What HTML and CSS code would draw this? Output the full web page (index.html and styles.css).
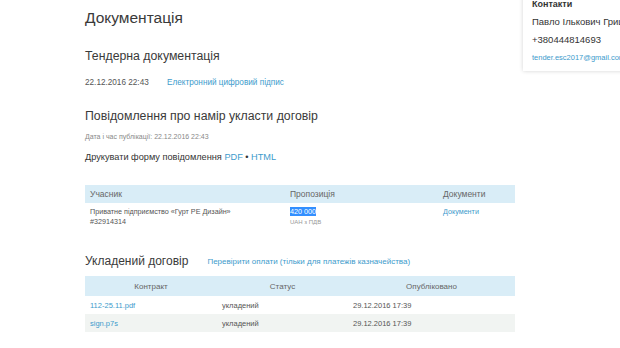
FILE: index.html
```html
<!DOCTYPE html>
<html lang="uk">
<head>
  <meta charset="UTF-8">
  <title>Документація</title>
  <link rel="stylesheet" href="styles.css">
</head>
<body>
  <div class="page">

    <!-- Main column -->
    <div class="main">
      <h1 class="title">Документація</h1>

      <h2 class="section-title">Тендерна документація</h2>
      <div class="doc-line">
        <span class="doc-date">22.12.2016 22:43</span>
        <a href="#" class="link">Електронний цифровий підпис</a>
      </div>

      <h2 class="section-title">Повідомлення про намір укласти договір</h2>
      <p class="meta">Дата і час публікації: 22.12.2016 22:43</p>
      <p class="print">Друкувати форму повідомлення <a href="#" class="link">PDF</a> &bull; <a href="#" class="link">HTML</a></p>

      <table class="grid bids">
        <thead>
          <tr>
            <th class="c-part">Учасник</th>
            <th class="c-offer">Пропозиція</th>
            <th>Документи</th>
          </tr>
        </thead>
        <tbody>
          <tr>
            <td>Приватне підприємство «Гурт РЕ Дизайн»<br>#32914314</td>
            <td><span class="amount">420 000</span><br><span class="currency">UAH з ПДВ</span></td>
            <td><a href="#" class="link">Документи</a></td>
          </tr>
        </tbody>
      </table>

      <div class="contract-head">
        <h3 class="contract-title">Укладений договір</h3>
        <a href="#" class="link check">Перевірити оплати (тільки для платежів казначейства)</a>
      </div>

      <table class="grid contracts">
        <thead>
          <tr>
            <th class="c-file">Контракт</th>
            <th class="c-status">Статус</th>
            <th>Опубліковано</th>
          </tr>
        </thead>
        <tbody>
          <tr>
            <td><a href="#" class="link">112-25.11.pdf</a></td>
            <td>укладений</td>
            <td>29.12.2016 17:39</td>
          </tr>
          <tr class="odd">
            <td><a href="#" class="link">sign.p7s</a></td>
            <td>укладений</td>
            <td>29.12.2016 17:39</td>
          </tr>
        </tbody>
      </table>
    </div>

    <!-- Contacts sidebar -->
    <div class="contacts">
      <div class="contacts-title">Контакти</div>
      <div class="contacts-line">Павло Ількович Грицай</div>
      <div class="contacts-line">+380444814693</div>
      <div class="contacts-line email"><a href="#" class="link">tender.esc2017@gmail.com</a></div>
    </div>

  </div>
</body>
</html>
```

FILE: styles.css
```css
html, body { margin: 0; padding: 0; background: #fff; overflow: hidden; }
body { font-family: "Liberation Sans", Arial, sans-serif; color: #333; }
.page { display: flex; align-items: flex-start; gap: 8px; padding-left: 85px; }
.main { width: 430px; flex: none; padding-top: 7px; }
.link { color: #3d9bcc; text-decoration: none; }

.title { font-size: 15.5px; line-height: 22px; font-weight: normal; margin: 0 0 18px; color: #3a3a3a; }
.section-title { font-size: 12.3px; line-height: 18px; font-weight: normal; margin: 0; color: #3a3a3a; }
.doc-line { font-size: 8.2px; line-height: 12px; margin: 12px 0 18px; color: #555; }
.doc-date { margin-right: 16px; }
.meta { font-size: 7px; line-height: 10px; color: #888; margin: 7px 0 0; }
.print { font-size: 9.2px; line-height: 12px; margin: 9px 0 22px; }

.grid { width: 430px; border-collapse: collapse; table-layout: fixed; }
.grid th { background: #d9edf7; font-weight: normal; color: #666; }
.grid td { color: #555; vertical-align: top; }

.bids th { text-align: left; font-size: 8.5px; height: 18px; padding: 0 5px; }
.bids td { font-size: 7.2px; line-height: 10px; padding: 4px 5px 4px; }
.bids .c-part { width: 190px; }
.bids .c-offer { width: 143px; }
.amount { background: #338fff; color: #fff; }
.currency { font-size: 6px; color: #999; }

.contract-head { display: flex; align-items: center; gap: 19px; margin: 22px 0 7px; }
.contract-title { font-size: 12px; line-height: 16px; font-weight: normal; margin: 0; color: #3a3a3a; }
.check { font-size: 8px; }

.contracts th { text-align: center; font-size: 8px; height: 20px; padding: 0; }
.contracts td { font-size: 7.5px; height: 18px; padding: 0 5px; vertical-align: middle; }
.contracts .c-file { width: 132px; }
.contracts .c-status { width: 131px; }
.contracts .odd td { background: #f1f4f2; }

.contacts { flex: none; width: 130px; margin-top: -5px; padding: 0 0 4px 9px; background: #fff; box-shadow: 0 0 4px rgba(0, 0, 0, 0.18); white-space: nowrap; }
.contacts-title { font-size: 9px; line-height: 18px; font-weight: bold; }
.contacts-line { font-size: 9.5px; line-height: 18px; }
.contacts-line.email { font-size: 7.5px; }
```
